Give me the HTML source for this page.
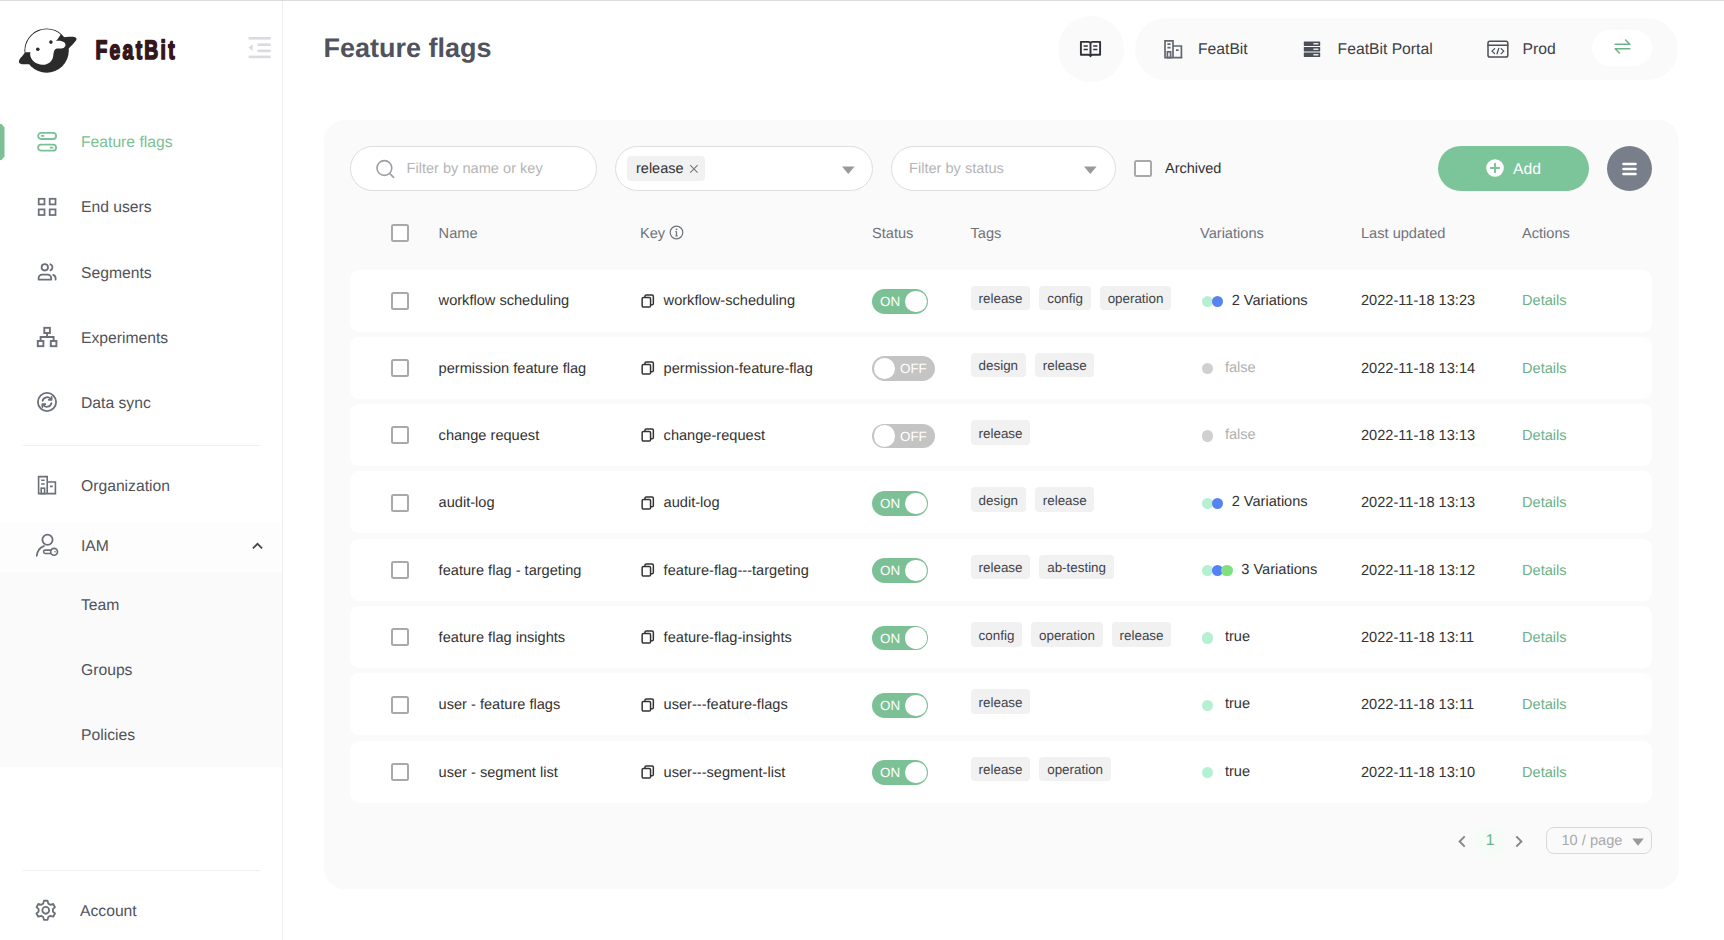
<!DOCTYPE html>
<html lang="en">
<head>
<meta charset="utf-8">
<title>Feature flags - FeatBit</title>
<style>
*{box-sizing:border-box;margin:0;padding:0}
html,body{width:1724px;height:940px;overflow:hidden;background:#fff}
body{text-rendering:geometricPrecision;font-family:"Liberation Sans",Arial,sans-serif;color:#3b3f46;position:relative}
.abs{position:absolute}
/* sidebar */
#side{position:absolute;left:0;top:0;width:283px;height:940px;border-right:1px solid #efefef;background:#fff}
.nav{position:absolute;left:0;width:282px;height:40px;display:flex;align-items:center;font-size:15.7px;color:#4f535a}
.nav svg{position:absolute;left:36px;top:9px;width:22px;height:22px}
.nav span{position:absolute;left:81px;top:1.7px;line-height:40px;white-space:nowrap}
.nav.on{color:#7cc196}
.hr{position:absolute;left:23px;width:237px;height:1px;background:#efefef}
/* main */
#title{position:absolute;left:323.5px;top:28.4px;font-size:27px;font-weight:700;color:#4f535d;line-height:40px;white-space:nowrap}
.hicon{position:absolute}
.htxt{position:absolute;top:39.1px;font-size:15.7px;line-height:22px;color:#3b3f46;white-space:nowrap}
#card{position:absolute;left:324px;top:120px;width:1355px;height:769px;background:#fafafa;border-radius:21px}
.inp{position:absolute;top:146px;height:45px;border:1px solid #dedede;border-radius:23px;background:#fff;font-size:14.6px;color:#b5b5b5}
.th{position:absolute;top:222.5px;font-size:14.6px;line-height:22px;color:#6f737a;white-space:nowrap}
.cb{position:absolute;width:17.8px;height:17.8px;box-shadow:inset 0 0 0 2px #a9a9a9;border-radius:2.5px;background:#fff}
.row{position:absolute;left:350px;width:1302px;height:62px;background:#fff;border-radius:9px;font-size:14.6px;color:#333}
.row .c{position:absolute;top:20.8px;line-height:22px;white-space:nowrap}
.row .cb{left:41px;top:22.3px}
.row .copy{position:absolute;left:291.2px;top:24.3px;width:13.5px;height:14px}
.sw{position:absolute;left:522px;top:19.5px;height:24.6px;border-radius:13px;color:#fff;font-size:13.4px;line-height:25.6px}
.sw.on{width:56px;background:#7cc196;padding-left:8px}
.sw.off{width:63px;background:#c4c4c4;padding-left:28px}
.sw i{position:absolute;top:1.6px;width:21.4px;height:21.4px;border-radius:50%;background:#fff}
.sw.on i{right:1.4px}.sw.off i{left:1.6px}
.tags{position:absolute;left:620.8px;top:16px;display:flex;gap:9.1px}
.tag{height:24.5px;padding:1.5px 7.8px 0;background:#f1f1f1;border-radius:4px;font-size:13.4px;line-height:23px;color:#3f444b;white-space:nowrap}
.var{position:absolute;left:852.3px;top:20px;height:22px;display:flex;align-items:center;line-height:22px;white-space:nowrap}
.dot{width:11.2px;height:11.2px;border-radius:50%;display:inline-block;position:relative;top:.9px}
.g1{background:#b5f0d3}.bl{background:#5583f2}.g2{background:#7fe07f}.gr{background:#d0d0d0}
.link{color:#6bb288}
</style>
</head>
<body>
<div class="abs" style="left:0;top:0;width:1724px;height:1px;background:#dcdcdc;z-index:5"></div>
<div id="side">
  <!-- logo -->
  <svg class="abs" style="left:14px;top:22.6px" width="70" height="56" viewBox="14 22 70 56">
    <circle cx="46.6" cy="49.6" r="22.2" fill="#2b2b2b"/>
    <path d="M26 50.5 C23 54.5 19.2 57.6 18.9 60.4 C18.8 63.4 23.5 63.6 30 63.2 L32 56Z" fill="#2b2b2b"/>
    <path d="M61 36.6 C66 36 71 35.4 74.2 35.9 C77.2 36.5 77 38.6 75.4 40.2 C73.4 43 70.4 45.2 68.4 48 L63 43Z" fill="#2b2b2b"/>
    <path d="M25.3 51.2 A21.5 21.5 0 0 1 60.6 33.4 C59.4 35.6 57.6 38.4 55.9 40 C58.4 39.4 62.2 39.5 64.4 41.5 C66.4 43.6 65.6 46.4 62.6 47.3 C60.2 47.9 57.4 47 55.7 47.9 C53.4 49.2 53.7 53 53 56 C52 61 47.5 64 42.5 63.8 C36 63.5 30.6 59 30.2 54 C30.1 52.6 30.5 51.6 30.4 51.2Z" fill="#fff"/>
    <circle cx="37.8" cy="48.3" r="1.8" fill="#2b2b2b"/><circle cx="50.9" cy="41.1" r="1.8" fill="#2b2b2b"/>
  </svg>
  <svg class="abs" style="left:93px;top:32px" width="90" height="34" viewBox="0 0 90 34"><text transform="translate(2.5 27.200) scale(0.72 1)" x="0" y="0" font-family="Liberation Sans, Arial, sans-serif" font-weight="700" font-size="26.800" fill="#34161b" stroke="#34161b" stroke-width="1.700" stroke-linejoin="round" textLength="110" lengthAdjust="spacing">FeatBit</text></svg>
  <svg class="abs" style="left:248px;top:36px" width="24" height="23" viewBox="0 0 24 23" fill="#d9dbe0"><rect x="0.5" y="1" width="22.2" height="2.6"/><rect x="9.5" y="7.4" width="13.2" height="2.6"/><rect x="9.5" y="13.6" width="13.2" height="2.6"/><rect x="0.5" y="19.6" width="22.2" height="2.6"/><path d="M0.5 11.6 L4.6 8.2 V15Z"/></svg>

  <div class="abs" style="left:0;top:124px;width:4.5px;height:36px;background:#7cc196;clip-path:polygon(0 0,1.5px 0,100% 3.5px,100% calc(100% - 3.5px),1.5px 100%,0 100%)"></div>
  <div class="nav on" style="top:121.5px"><svg viewBox="0 0 22 22" fill="none" stroke="#7cc196" stroke-width="1.8"><rect x="2.1" y="1.9" width="18" height="6.1" rx="3.05"/><rect x="2.1" y="13.6" width="18" height="6.1" rx="3.05"/><path d="M5.6 4.95h2M14.6 16.65h2" stroke-width="1.7" stroke-linecap="round"/></svg><span>Feature flags</span></div>
  <div class="nav" style="top:186.8px"><svg viewBox="0 0 22 22" fill="none" stroke="#6b7078" stroke-width="1.750"><rect x="2.7" y="2.8" width="5.8" height="5.6"/><rect x="13.7" y="2.8" width="5.8" height="5.6"/><rect x="2.7" y="13.4" width="5.8" height="5.6"/><rect x="13.7" y="13.4" width="5.8" height="5.6"/></svg><span>End users</span></div>
  <div class="nav" style="top:252px"><svg viewBox="0 0 22 22" fill="none" stroke="#6b7078" stroke-width="1.8" stroke-linecap="round" stroke-linejoin="round"><circle cx="8.8" cy="6.3" r="3.2"/><path d="M2.6 18.6v-1.300a3.600 3.600 0 0 1 3.600-3.600h5.400a3.600 3.600 0 0 1 3.600 3.600v1.300z"/><path d="M14.400 3.300a3.200 3.200 0 0 1 0 6M17.200 13.900a3.600 3.600 0 0 1 2.400 3.400v1.300"/></svg><span>Segments</span></div>
  <div class="nav" style="top:317.2px"><svg viewBox="0 0 22 22" fill="none" stroke="#6b7078" stroke-width="1.9"><rect x="8.3" y="1.8" width="5.6" height="5.2"/><rect x="1.8" y="15" width="5.6" height="5.2"/><rect x="14.8" y="15" width="5.6" height="5.2"/><path d="M11.1 7v4M4.6 15v-4h13v4"/></svg><span>Experiments</span></div>
  <div class="nav" style="top:382.4px"><svg viewBox="0 0 22 22" fill="none" stroke="#6b7078" stroke-width="1.800"><circle cx="11" cy="11" r="9.100"/><path d="M6.6 9.8a4.6 4.6 0 0 1 8.4-1.4M15.4 12.2a4.6 4.6 0 0 1-8.4 1.4" stroke-linecap="round"/><path d="M15.6 5.9v2.9h-2.9M6.4 16.1v-2.9h2.9" stroke-linecap="round" stroke-linejoin="round"/></svg><span>Data sync</span></div>
  <div class="hr" style="top:445px"></div>
  <div class="nav" style="top:465px"><svg viewBox="0 0 22 22" fill="none" stroke="#6b7078" stroke-width="1.600"><path d="M2.6 19.6V2.6h8.6v17M11.2 8h8.2v11.6M1.8 19.6h18.4"/><path d="M5.2 6.2h3.4M5.2 10h3.4M14 12.4h2.8" /><rect x="5.2" y="14.2" width="3.4" height="5.4"/></svg><span>Organization</span></div>
  <div class="abs" style="left:0;top:523px;width:282px;height:49px;background:#fdfdfd"></div>
  <div class="abs" style="left:0;top:572px;width:282px;height:195px;background:#fafafa"></div>
  <div class="nav" style="top:525px"><svg viewBox="0 0 24 24" style="left:35px;top:7px;width:25px;height:25px" fill="none" stroke="#6b7078" stroke-width="1.750" stroke-linecap="round"><circle cx="12" cy="7.4" r="4.9"/><path d="M1.7 22.8c.6-5 3.2-8 6.800-9.300"/><path d="M15.400 17.400H9.800a1.600 1.600 0 0 0 0 3.200h5.600" stroke-width="1.500"/><circle cx="18.300" cy="19" r="3.300" stroke-width="1.600"/><circle cx="19.300" cy="19" r=".7" fill="#6b7078" stroke="none"/></svg><span>IAM</span>
    <svg viewBox="0 0 12 8" style="left:251.500px;top:16.800px;width:11px;height:8px" fill="none" stroke="#444" stroke-width="1.900"><path d="M1 6.6l5-5 5 5"/></svg></div>
  <div class="nav" style="top:584px"><span>Team</span></div>
  <div class="nav" style="top:649.2px"><span>Groups</span></div>
  <div class="nav" style="top:714.3px"><span>Policies</span></div>
  <div class="hr" style="top:870px"></div>
  <div class="nav" style="top:890.3px"><svg viewBox="0 0 24 24" style="left:33.200px;top:7.700px;width:25.500px;height:25.500px" fill="none" stroke="#6b7078" stroke-width="1.700" stroke-linejoin="round"><path d="M10.3 2.6h3.4l.7 2.7 1.9 1.1 2.7-.8 1.7 3-2 1.9v2.2l2 1.9-1.7 3-2.7-.8-1.9 1.1-.7 2.7h-3.4l-.7-2.7-1.9-1.1-2.7.8-1.7-3 2-1.9v-2.2l-2-1.900 1.7-3 2.700.8 1.900-1.100z"/><circle cx="12" cy="11.600" r="3.2"/></svg><span style="left:80px">Account</span></div>
</div>
<div id="title">Feature flags</div>
<div id="card"></div>
<div class="abs" style="left:1058px;top:16px;width:66px;height:66px;border-radius:50%;background:#fafafa"></div>
<svg class="abs" style="left:1079px;top:39px" width="23" height="20" viewBox="0 0 23 20" fill="none" stroke="#2f3237" stroke-width="1.900" stroke-linejoin="round"><path d="M1.9 2.9h7.4c1.2 0 2.2.6 2.2 1.800v12.600c0-.9-1-1.500-2.200-1.500H1.900zM21.100 2.900h-7.400c-1.200 0-2.200.6-2.200 1.800v12.600c0-.9 1-1.500 2.200-1.500h7.400z"/><path d="M4.600 7h4.200M4.600 10.600h4.200M14.200 7h4.200M14.200 10.600h4.200" stroke-width="1.5"/></svg>
<div class="abs" style="left:1135px;top:18px;width:543px;height:62px;border-radius:31px;background:#fafafa"></div>
<svg class="abs" style="left:1163px;top:39px" width="21" height="20" viewBox="0 0 21 20" fill="none" stroke="#63676f" stroke-width="1.700"><path d="M2 18.600V1.800h8v16.800M10 7h8.400v11.600M1.200 18.600h18.200"/><path d="M4.400 5.200h3.200M4.400 8.600h3.200M13 11.200h2.600"/><rect x="4.400" y="12.800" width="3.200" height="5.800"/></svg>
<div class="htxt" style="left:1198px">FeatBit</div>
<svg class="abs" style="left:1303px;top:41px" width="18" height="17" viewBox="0 0 18 17"><g fill="#4a4f58"><rect x="0.800" y="0.400" width="16.400" height="4.600" rx=".6"/><rect x="0.800" y="5.900" width="16.400" height="4.600" rx=".6"/><rect x="0.800" y="11.400" width="16.400" height="4.600" rx=".6"/></g><g fill="#e8e9eb"><rect x="10.400" y="2" width="5" height="1.500"/><rect x="10.400" y="7.500" width="5" height="1.500"/><rect x="10.400" y="13" width="5" height="1.500"/></g></svg>
<div class="htxt" style="left:1337.600px">FeatBit Portal</div>
<svg class="abs" style="left:1486px;top:39px" width="24" height="20" viewBox="0 0 24 20" fill="none" stroke="#4a4f58" stroke-width="1.5" stroke-linejoin="round" stroke-linecap="round"><rect x="2" y="2.200" width="19.800" height="15.800" rx="1.800"/><path d="M2 6.200h19.800"/><path d="M8.600 9.600l-2.600 2.500 2.600 2.500M15.200 9.600l2.600 2.500-2.600 2.500M12.800 9.400l-1.800 5.400" stroke-width="1.300"/></svg>
<div class="htxt" style="left:1522.500px">Prod</div>
<div class="abs" style="left:1592px;top:30px;width:60px;height:36px;border-radius:18px;background:#fff"></div>
<svg class="abs" style="left:1613px;top:38px" width="19" height="18" viewBox="0 0 19 18" fill="none" stroke="#6bb288" stroke-width="1.500" stroke-linecap="round" stroke-linejoin="round"><path d="M2.200 6.200h14.600l-4.200-4.200M16.800 10.800H2.200l4.200 4.200"/></svg>

<div class="inp" style="left:350px;width:247px"><svg class="abs" style="left:24px;top:11px" width="21" height="22" viewBox="0 0 21 22" fill="none" stroke="#9b9ea3" stroke-width="1.600" stroke-linecap="round"><circle cx="9.400" cy="10" r="7.400"/><path d="M14.800 15.600l3.800 3.800"/></svg><span class="abs" style="left:55.500px;top:11.100px;line-height:22px;white-space:nowrap">Filter by name or key</span></div>
<div class="inp" style="left:615px;width:258px"><span class="abs" style="left:10.500px;top:8.700px;height:25px;width:78px;background:#f1f1f1;border-radius:4px;color:#333;font-size:14.500px;line-height:26.800px;padding-left:9.500px;white-space:nowrap">release<svg class="abs" style="left:62px;top:8px" width="10" height="10" viewBox="0 0 10 10" fill="none" stroke="#777" stroke-width="1.100"><path d="M1.200 1.200l7.400 7.400M8.600 1.200L1.200 8.600"/></svg></span><svg class="abs" style="left:226px;top:19px" width="12.600" height="8.200" viewBox="0 0 14 9" fill="#999"><path d="M0 0.500h14L7 8.800z"/></svg></div>
<div class="inp" style="left:891px;width:225px"><span class="abs" style="left:17px;top:11.100px;line-height:22px;white-space:nowrap">Filter by status</span><svg class="abs" style="left:192px;top:19px" width="12.600" height="8.200" viewBox="0 0 14 9" fill="#999"><path d="M0 0.500h14L7 8.800z"/></svg></div>
<div class="cb" style="left:1134px;top:159.500px"></div>
<div class="abs" style="left:1165px;top:158px;font-size:14.500px;line-height:22px;color:#333">Archived</div>
<div class="abs" style="left:1438px;top:146px;width:151px;height:45px;border-radius:23px;background:#7cc49a;color:#fff;font-size:15.700px"><svg class="abs" style="left:48px;top:12.600px" width="18" height="18" viewBox="0 0 18 18"><circle cx="9" cy="9" r="8.800" fill="#fff"/><path d="M9 4.800v8.400M4.800 9h8.400" stroke="#7cc49a" stroke-width="2" stroke-linecap="round"/></svg><span class="abs" style="left:75px;top:13.100px;line-height:22px">Add</span></div>
<div class="abs" style="left:1607px;top:146px;width:45px;height:45px;border-radius:50%;background:#787e8a"><svg class="abs" style="left:15px;top:15.500px" width="15" height="14" viewBox="0 0 15 14" stroke="#fff" stroke-width="2.600" stroke-linecap="round"><path d="M1.500 2h12M1.500 7h12M1.500 12h12"/></svg></div>
<div class="cb" style="left:391.2px;top:224.4px"></div>
<div class="th" style="left:438.6px">Name</div>
<div class="th" style="left:640px">Key <svg style="vertical-align:-2px" width="15" height="15" viewBox="0 0 15 15" fill="none" stroke="#6f737a" stroke-width="1.200"><circle cx="7.500" cy="7.500" r="6.300"/><path d="M7.500 6.600v4.400M6.300 6.700h1.200M6.200 11h2.600" stroke-width="1.200"/><circle cx="7.500" cy="4.300" r=".9" fill="#6f737a" stroke="none"/></svg></div>
<div class="th" style="left:872px">Status</div>
<div class="th" style="left:970.500px">Tags</div>
<div class="th" style="left:1200px">Variations</div>
<div class="th" style="left:1361px">Last updated</div>
<div class="th" style="left:1522px">Actions</div>
<div class="row" style="top:269.50px"><div class="cb"></div><div class="c" style="left:88.6px">workflow scheduling</div><svg class="copy" viewBox="0 0 14 15" fill="none" stroke="#333" stroke-width="1.600" stroke-linejoin="round"><rect x="1" y="3.800" width="9" height="10.200" rx="1.400" fill="#fff"/><path d="M4 3.600V2.400c0-.8.600-1.400 1.400-1.400h6.200c.8 0 1.400.6 1.400 1.400v7.800c0 .8-.6 1.400-1.400 1.400h-1.400"/></svg><div class="c" style="left:313.6px">workflow-scheduling</div><div class="sw on">ON<i></i></div><div class="tags"><span class="tag">release</span><span class="tag">config</span><span class="tag">operation</span></div><div class="var"><span class="dot g1"></span><span class="dot bl" style="margin-left:-1.6px"></span><span style="margin-left:8.6px">2 Variations</span></div><div class="c" style="left:1011px">2022-11-18 13:23</div><div class="c link" style="left:1172px">Details</div></div>
<div class="row" style="top:336.83px"><div class="cb"></div><div class="c" style="left:88.6px">permission feature flag</div><svg class="copy" viewBox="0 0 14 15" fill="none" stroke="#333" stroke-width="1.600" stroke-linejoin="round"><rect x="1" y="3.800" width="9" height="10.200" rx="1.400" fill="#fff"/><path d="M4 3.600V2.400c0-.8.600-1.400 1.400-1.400h6.200c.8 0 1.400.6 1.400 1.400v7.800c0 .8-.6 1.400-1.400 1.400h-1.400"/></svg><div class="c" style="left:313.6px">permission-feature-flag</div><div class="sw off">OFF<i></i></div><div class="tags"><span class="tag">design</span><span class="tag">release</span></div><div class="var"><span class="dot gr"></span><span style="margin-left:11.4px;color:#b0b0b0">false</span></div><div class="c" style="left:1011px">2022-11-18 13:14</div><div class="c link" style="left:1172px">Details</div></div>
<div class="row" style="top:404.16px"><div class="cb"></div><div class="c" style="left:88.6px">change request</div><svg class="copy" viewBox="0 0 14 15" fill="none" stroke="#333" stroke-width="1.600" stroke-linejoin="round"><rect x="1" y="3.800" width="9" height="10.200" rx="1.400" fill="#fff"/><path d="M4 3.600V2.400c0-.8.600-1.400 1.400-1.400h6.200c.8 0 1.400.6 1.400 1.400v7.800c0 .8-.6 1.400-1.400 1.400h-1.400"/></svg><div class="c" style="left:313.6px">change-request</div><div class="sw off">OFF<i></i></div><div class="tags"><span class="tag">release</span></div><div class="var"><span class="dot gr"></span><span style="margin-left:11.4px;color:#b0b0b0">false</span></div><div class="c" style="left:1011px">2022-11-18 13:13</div><div class="c link" style="left:1172px">Details</div></div>
<div class="row" style="top:471.49px"><div class="cb"></div><div class="c" style="left:88.6px">audit-log</div><svg class="copy" viewBox="0 0 14 15" fill="none" stroke="#333" stroke-width="1.600" stroke-linejoin="round"><rect x="1" y="3.800" width="9" height="10.200" rx="1.400" fill="#fff"/><path d="M4 3.600V2.400c0-.8.600-1.400 1.400-1.400h6.200c.8 0 1.400.6 1.400 1.400v7.800c0 .8-.6 1.400-1.400 1.400h-1.400"/></svg><div class="c" style="left:313.6px">audit-log</div><div class="sw on">ON<i></i></div><div class="tags"><span class="tag">design</span><span class="tag">release</span></div><div class="var"><span class="dot g1"></span><span class="dot bl" style="margin-left:-1.6px"></span><span style="margin-left:8.6px">2 Variations</span></div><div class="c" style="left:1011px">2022-11-18 13:13</div><div class="c link" style="left:1172px">Details</div></div>
<div class="row" style="top:538.82px"><div class="cb"></div><div class="c" style="left:88.6px">feature flag - targeting</div><svg class="copy" viewBox="0 0 14 15" fill="none" stroke="#333" stroke-width="1.600" stroke-linejoin="round"><rect x="1" y="3.800" width="9" height="10.200" rx="1.400" fill="#fff"/><path d="M4 3.600V2.400c0-.8.600-1.400 1.400-1.400h6.200c.8 0 1.400.6 1.400 1.400v7.800c0 .8-.6 1.400-1.400 1.400h-1.400"/></svg><div class="c" style="left:313.6px">feature-flag---targeting</div><div class="sw on">ON<i></i></div><div class="tags"><span class="tag">release</span><span class="tag">ab-testing</span></div><div class="var"><span class="dot g1"></span><span class="dot bl" style="margin-left:-1.6px"></span><span class="dot g2" style="margin-left:-1.6px"></span><span style="margin-left:8.6px">3 Variations</span></div><div class="c" style="left:1011px">2022-11-18 13:12</div><div class="c link" style="left:1172px">Details</div></div>
<div class="row" style="top:606.15px"><div class="cb"></div><div class="c" style="left:88.6px">feature flag insights</div><svg class="copy" viewBox="0 0 14 15" fill="none" stroke="#333" stroke-width="1.600" stroke-linejoin="round"><rect x="1" y="3.800" width="9" height="10.200" rx="1.400" fill="#fff"/><path d="M4 3.600V2.400c0-.8.600-1.400 1.400-1.400h6.200c.8 0 1.400.6 1.400 1.400v7.800c0 .8-.6 1.400-1.400 1.400h-1.400"/></svg><div class="c" style="left:313.6px">feature-flag-insights</div><div class="sw on">ON<i></i></div><div class="tags"><span class="tag">config</span><span class="tag">operation</span><span class="tag">release</span></div><div class="var"><span class="dot g1"></span><span style="margin-left:11.4px">true</span></div><div class="c" style="left:1011px">2022-11-18 13:11</div><div class="c link" style="left:1172px">Details</div></div>
<div class="row" style="top:673.48px"><div class="cb"></div><div class="c" style="left:88.6px">user - feature flags</div><svg class="copy" viewBox="0 0 14 15" fill="none" stroke="#333" stroke-width="1.600" stroke-linejoin="round"><rect x="1" y="3.800" width="9" height="10.200" rx="1.400" fill="#fff"/><path d="M4 3.600V2.400c0-.8.600-1.400 1.400-1.400h6.200c.8 0 1.400.6 1.400 1.400v7.800c0 .8-.6 1.400-1.400 1.400h-1.400"/></svg><div class="c" style="left:313.6px">user---feature-flags</div><div class="sw on">ON<i></i></div><div class="tags"><span class="tag">release</span></div><div class="var"><span class="dot g1"></span><span style="margin-left:11.4px">true</span></div><div class="c" style="left:1011px">2022-11-18 13:11</div><div class="c link" style="left:1172px">Details</div></div>
<div class="row" style="top:740.81px"><div class="cb"></div><div class="c" style="left:88.6px">user - segment list</div><svg class="copy" viewBox="0 0 14 15" fill="none" stroke="#333" stroke-width="1.600" stroke-linejoin="round"><rect x="1" y="3.800" width="9" height="10.200" rx="1.400" fill="#fff"/><path d="M4 3.600V2.400c0-.8.600-1.400 1.400-1.400h6.200c.8 0 1.400.6 1.400 1.400v7.800c0 .8-.6 1.400-1.400 1.400h-1.400"/></svg><div class="c" style="left:313.6px">user---segment-list</div><div class="sw on">ON<i></i></div><div class="tags"><span class="tag">release</span><span class="tag">operation</span></div><div class="var"><span class="dot g1"></span><span style="margin-left:11.4px">true</span></div><div class="c" style="left:1011px">2022-11-18 13:10</div><div class="c link" style="left:1172px">Details</div></div>

<svg class="abs" style="left:1456.5px;top:834.5px" width="10" height="13" viewBox="0 0 10 13" fill="none" stroke="#868686" stroke-width="1.9"><path d="M7.7 1.3L2.6 6.500 7.700 11.700"/></svg>
<div class="abs" style="left:1475px;top:825.500px;width:30px;height:30px;border-radius:50%;background:#f5fbf7"></div>
<div class="abs" style="left:1480px;top:830.300px;width:20px;text-align:center;font-size:15.700px;line-height:22px;color:#6bb288">1</div>
<svg class="abs" style="left:1514px;top:834.500px" width="10" height="13" viewBox="0 0 10 13" fill="none" stroke="#868686" stroke-width="1.900"><path d="M2.300 1.300L7.400 6.500 2.300 11.700"/></svg>
<div class="abs" style="left:1546px;top:827px;width:106px;height:27px;border:1px solid #d9d9d9;border-radius:8px;background:#fafafa;font-size:14.600px;color:#a9a9a9"><span class="abs" style="left:14.500px;top:1.800px;line-height:22px;white-space:nowrap">10 / page</span><svg class="abs" style="left:85px;top:9.500px" width="12" height="8" viewBox="0 0 13 9" fill="#999"><path d="M0 0.500h13L6.500 8.800z"/></svg></div>
</body>
</html>
